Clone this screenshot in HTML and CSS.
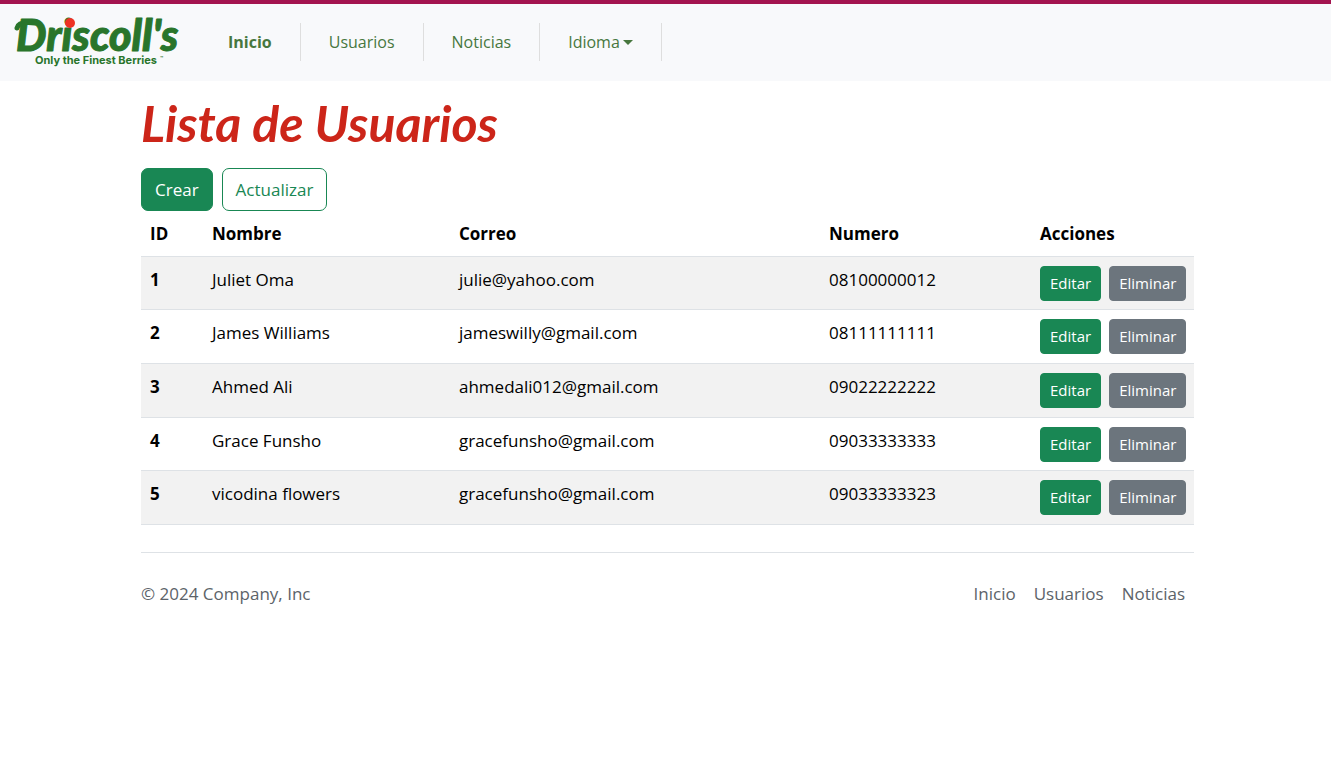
FILE: index.html
```html
<!DOCTYPE html>
<html lang="es">
<head>
<meta charset="utf-8">
<meta name="viewport" content="width=device-width, initial-scale=1">
<title>Lista de Usuarios</title>
<link rel="stylesheet" href="styles.css">
</head>
<body>
<header class="navbar">
  <a class="brand" href="#" aria-label="Driscoll's">
    <svg class="logo" width="173" height="73" viewBox="0 0 173 73">
      <path class="swash" d="M4 23 C5 18 13 17 22 18"/>
      <text class="logo-name" x="3" y="46">Driscoll's</text>
      <circle class="logo-berry" cx="57" cy="18" r="5"/>
      <text class="logo-tag" x="22" y="59">Only the Finest Berries</text>
      <text class="logo-tm" x="147" y="55">™</text>
    </svg>
  </a>
  <nav class="menu">
    <a class="menu-item active" href="#">Inicio</a>
    <a class="menu-item" href="#">Usuarios</a>
    <a class="menu-item" href="#">Noticias</a>
    <button class="menu-item dropdown" type="button">Idioma<span class="caret"></span></button>
  </nav>
</header>
<div class="container">
  <main>
    <h1 class="title">Lista de Usuarios</h1>
    <div class="toolbar">
      <button class="btn btn-success" type="button">Crear</button>
      <button class="btn btn-outline" type="button">Actualizar</button>
    </div>
    <table class="users">
      <colgroup><col class="c-id"><col class="c-name"><col><col class="c-phone"><col class="c-actions"></colgroup>
      <thead>
        <tr><th scope="col">ID</th><th scope="col">Nombre</th><th scope="col">Correo</th><th scope="col">Numero</th><th scope="col">Acciones</th></tr>
      </thead>
      <tbody>
        <tr><th scope="row">1</th><td>Juliet Oma</td><td>julie@yahoo.com</td><td>08100000012</td><td><div class="actions"><button class="btn btn-sm btn-success" type="button">Editar</button><button class="btn btn-sm btn-secondary" type="button">Eliminar</button></div></td></tr>
        <tr><th scope="row">2</th><td>James Williams</td><td>jameswilly@gmail.com</td><td>08111111111</td><td><div class="actions"><button class="btn btn-sm btn-success" type="button">Editar</button><button class="btn btn-sm btn-secondary" type="button">Eliminar</button></div></td></tr>
        <tr><th scope="row">3</th><td>Ahmed Ali</td><td>ahmedali012@gmail.com</td><td>09022222222</td><td><div class="actions"><button class="btn btn-sm btn-success" type="button">Editar</button><button class="btn btn-sm btn-secondary" type="button">Eliminar</button></div></td></tr>
        <tr><th scope="row">4</th><td>Grace Funsho</td><td>gracefunsho@gmail.com</td><td>09033333333</td><td><div class="actions"><button class="btn btn-sm btn-success" type="button">Editar</button><button class="btn btn-sm btn-secondary" type="button">Eliminar</button></div></td></tr>
        <tr><th scope="row">5</th><td>vicodina flowers</td><td>gracefunsho@gmail.com</td><td>09033333323</td><td><div class="actions"><button class="btn btn-sm btn-success" type="button">Editar</button><button class="btn btn-sm btn-secondary" type="button">Eliminar</button></div></td></tr>
      </tbody>
    </table>
  </main>
  <footer class="footer">
    <p class="copyright">© 2024 Company, Inc</p>
    <nav class="footer-links">
      <a href="#">Inicio</a>
      <a href="#">Usuarios</a>
      <a href="#">Noticias</a>
    </nav>
  </footer>
</div>
</body>
</html>
```

FILE: styles.css
```css
* { box-sizing: border-box; }

body {
  margin: 0;
  background: #fff;
  color: #000;
  font: 400 17px/27px "Open Sans", "Noto Sans", sans-serif;
}

a { color: inherit; text-decoration: none; }
button { font: inherit; cursor: pointer; }

.navbar {
  display: flex;
  align-items: center;
  gap: 14px;
  padding: 1px 13px 3px;
  border-top: 4px solid #a3144f;
  background: #f8f9fb;
}

.brand, .logo { display: block; }
.swash { fill: none; stroke: #29752b; stroke-width: 5; stroke-linecap: round; }
.logo-name {
  font: italic 900 43px Lato, sans-serif;
  fill: #29752b;
  stroke: #29752b;
  stroke-width: 1px;
  stroke-linejoin: round;
}
.logo-berry { fill: #ee3124; }
.logo-tag { font: 700 11px Inter, sans-serif; fill: #29752b; }
.logo-tm { font: 600 5px Inter, sans-serif; fill: #29752b; }

.menu { display: flex; }
.menu-item {
  padding: 6px 28px 5px;
  border: 0;
  border-right: 1px solid #dedede;
  background: none;
  color: #47773e;
  font-size: 16px;
}
.active { font-weight: 700; }
.dropdown { display: flex; align-items: center; gap: 3px; }
.caret {
  border: 5px solid transparent;
  border-top-color: #47773e;
  border-bottom: 0;
}

.container {
  max-width: 1057px;
  margin: 0 auto;
  padding-left: 4px;
}

.title {
  margin: 12px 0 15px;
  color: #cc2519;
  font: italic 700 50px/60px Lato, sans-serif;
}

.toolbar { display: flex; gap: 9px; }

.btn {
  padding: 7px 13px;
  border: 1px solid transparent;
  border-radius: 7px;
  line-height: 27px;
}
.btn-success { background: #198754; border-color: #198754; color: #fff; }
.btn-secondary { background: #6c757d; border-color: #6c757d; color: #fff; }
.btn-outline { background: #fff; border-color: #198754; color: #198754; }
.btn-sm {
  padding: 4px 9px;
  border-radius: 4px;
  font-size: 15px;
  line-height: 25px;
}

.users {
  width: 100%;
  table-layout: fixed;
  border-collapse: separate;
  border-spacing: 0;
}
.c-id { width: 62px; }
.c-name { width: 247px; }
.c-phone { width: 211px; }
.c-actions { width: 163px; }
.users th, .users td {
  padding: 9px;
  border-bottom: 1px solid #dee2e6;
  text-align: left;
  vertical-align: top;
}
.users th { font-weight: 700; }
.users tbody tr:nth-child(odd) { background: #f2f2f2; }
.users tbody tr:nth-child(3n+1) td { padding-bottom: 8px; }
.actions { display: flex; gap: 8px; }

.footer {
  display: flex;
  justify-content: space-between;
  flex-wrap: wrap;
  margin-top: 27px;
  padding: 27px 0;
  border-top: 1px solid #dee2e6;
  color: #5c6369;
}
.copyright { margin: 0; }
.footer-links { display: flex; gap: 18px; padding-right: 9px; }
```
